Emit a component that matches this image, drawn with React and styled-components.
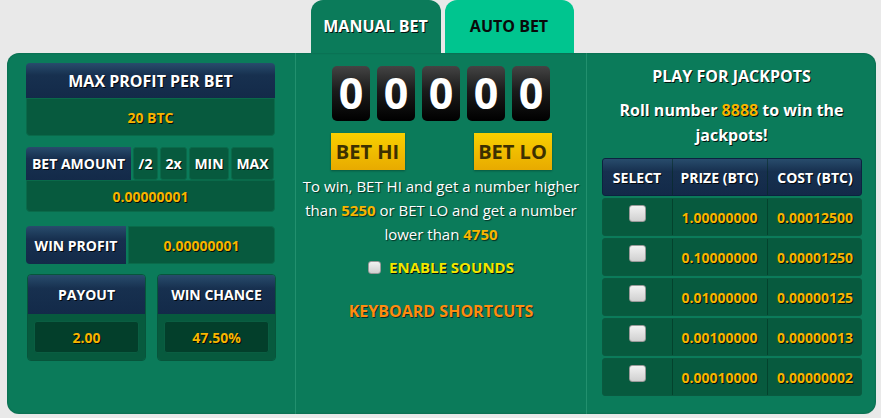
import React from 'react';
import styled, { createGlobalStyle } from 'styled-components';

const GlobalStyle = createGlobalStyle`
  body {
    margin: 0;
    background: #e9e9e9;
    font-family: 'Open Sans', 'Liberation Sans', sans-serif;
  }
`;

const shadow = '1px 1px 0 rgba(0, 0, 0, 0.85)';
const gold = '#f7b500';
const navy = 'linear-gradient(to bottom, #284c6c 0%, #17304f 35%, #132a49 100%)';

const Page = styled.div`
  width: 870px;
  padding-left: 7px;
`;

const Tabs = styled.div`
  display: flex;
  justify-content: center;
  gap: 4px;
  height: 53px;
`;

const Tab = styled.div`
  width: ${(p) => (p.active ? '130px' : '129px')};
  border-radius: 12px 12px 0 0;
  background: ${(p) => (p.active ? '#0b7b5a' : '#00c58f')};
  color: ${(p) => (p.active ? '#fff' : '#0a0a0a')};
  text-shadow: ${(p) => (p.active ? shadow : 'none')};
  font-weight: 700;
  font-size: 16px;
  display: flex;
  align-items: center;
  justify-content: center;
  padding-bottom: 2px;
  box-sizing: border-box;
`;

const Panel = styled.div`
  width: 869px;
  height: 361px;
  background: #0b7b5a;
  border-radius: 12px;
  display: grid;
  grid-template-columns: 289px 291px 289px;
  box-shadow: inset 0 0 2px rgba(0, 0, 0, 0.25);
`;

const Column = styled.div`
  box-sizing: border-box;
  padding: ${(p) => p.pad};
  border-right: ${(p) => (p.last ? 'none' : '1px solid rgba(120, 220, 180, 0.22)')};
  display: flex;
  flex-direction: column;
  align-items: ${(p) => (p.center ? 'center' : 'stretch')};
`;

const Header = styled.div`
  background: ${navy};
  color: #fff;
  text-shadow: ${shadow};
  font-weight: 700;
  font-size: ${(p) => p.size || '14px'};
  height: ${(p) => p.h};
  display: flex;
  align-items: center;
  justify-content: center;
  border-radius: ${(p) => p.radius || '4px 4px 0 0'};
  box-sizing: border-box;
  white-space: nowrap;
`;

const ValueBox = styled.div`
  background: #075a3e;
  color: ${gold};
  text-shadow: ${shadow};
  font-weight: 700;
  font-size: ${(p) => p.size || '14px'};
  height: ${(p) => p.h};
  display: flex;
  align-items: center;
  justify-content: center;
  border: 1px solid #0a6a4a;
  border-radius: ${(p) => p.radius || '0 0 4px 4px'};
  box-sizing: border-box;
`;

const Block = styled.div`
  display: flex;
  flex-direction: column;
  margin-top: ${(p) => p.mt || '0'};
`;

const BetRow = styled.div`
  display: grid;
  grid-template-columns: 105px 25px 27px 40px 43px;
  gap: 2px;
  height: 33px;
`;

const SmallBtn = styled.div`
  background: #075a3e;
  border: 1px solid #0a6a4a;
  border-radius: 3px;
  color: #fff;
  text-shadow: ${shadow};
  font-weight: 700;
  font-size: 14px;
  display: flex;
  align-items: center;
  justify-content: center;
`;

const SplitRow = styled.div`
  display: grid;
  grid-template-columns: 100px 1fr;
  gap: 2px;
  height: 38px;
  margin-top: 14px;
`;

const Cards = styled.div`
  display: grid;
  grid-template-columns: 119px 119px;
  gap: 11px;
  margin-top: 10px;
  padding-left: 1px;
`;

const Card = styled.div`
  display: flex;
  flex-direction: column;
  border-radius: 4px;
  overflow: hidden;
  border: 1px solid #07553b;
`;

const CardBody = styled.div`
  background: #075a3e;
  padding: 7px 6px;
  height: 46px;
  box-sizing: border-box;
`;

const InnerValue = styled.div`
  background: #033f2b;
  border: 1px solid #0a5e42;
  border-radius: 3px;
  height: 32px;
  display: flex;
  align-items: center;
  justify-content: center;
  color: ${gold};
  text-shadow: ${shadow};
  font-weight: 700;
  font-size: 14px;
  box-sizing: border-box;
`;

const Digits = styled.div`
  display: flex;
  gap: 7px;
`;

const Digit = styled.div`
  width: 38px;
  height: 55px;
  border-radius: 5px;
  background: linear-gradient(to bottom, #444 0%, #1b1b1b 45%, #000 100%);
  color: #fff;
  font-size: 43px;
  font-weight: 700;
  display: flex;
  align-items: center;
  justify-content: center;
  line-height: 1;
  padding-bottom: 2px;
  box-sizing: border-box;
`;

const Buttons = styled.div`
  display: flex;
  justify-content: space-between;
  width: 221px;
  margin-top: 12px;
`;

const BetButton = styled.div`
  width: ${(p) => p.w};
  height: 37px;
  background: linear-gradient(to bottom, #f8d000 0%, #e8aa00 100%);
  color: #3d3000;
  font-weight: 700;
  font-size: 20px;
  display: flex;
  align-items: center;
  justify-content: center;
  box-shadow: 0 1px 2px rgba(0, 0, 0, 0.3);
`;

const Info = styled.p`
  margin: 4px 0 0;
  color: #fff;
  text-shadow: 1px 1px 1px rgba(0, 0, 0, 0.6);
  font-size: 15px;
  line-height: 24px;
  text-align: center;
`;

const Gold = styled.span`
  color: ${gold};
  font-weight: 700;
`;

const SoundRow = styled.label`
  display: flex;
  align-items: center;
  gap: 8px;
  margin-top: 11px;
  color: #f2e600;
  font-weight: 700;
  font-size: 15px;
  text-shadow: ${shadow};
`;

const Check = styled.span`
  display: inline-block;
  width: ${(p) => p.size || '13px'};
  height: ${(p) => p.size || '13px'};
  border-radius: 3px;
  border: 1px solid #9a9a9a;
  background: linear-gradient(to bottom, #f2f2f2, #d0d0d0);
  box-sizing: border-box;
`;

const Shortcuts = styled.div`
  margin-top: 23px;
  color: #ff8c10;
  font-weight: 700;
  font-size: 16px;
  text-shadow: 1px 1px 0 rgba(0, 0, 0, 0.6);
`;

const Title = styled.div`
  color: #fff;
  text-shadow: ${shadow};
  font-weight: 700;
  font-size: 16px;
  text-align: center;
`;

const Roll = styled.div`
  margin-top: 11px;
  color: #fff;
  text-shadow: ${shadow};
  font-weight: 700;
  font-size: 16px;
  line-height: 25px;
  text-align: center;
`;

const Table = styled.div`
  margin-top: 10px;
  display: flex;
  flex-direction: column;
  gap: 2px;
  width: 260px;
  align-self: center;
`;

const TRow = styled.div`
  display: grid;
  grid-template-columns: 70px 95px 95px;
  height: 38px;
  background: ${(p) => (p.head ? navy : '#075a3e')};
  border: 1px solid ${(p) => (p.head ? '#0c2240' : '#0a5a40')};
  border-radius: 3px;
  box-sizing: border-box;
`;

const TCell = styled.div`
  display: flex;
  align-items: ${(p) => (p.top ? 'flex-start' : 'center')};
  justify-content: center;
  padding-top: ${(p) => (p.top ? '6px' : '0')};
  border-right: ${(p) => (p.last ? 'none' : '1px solid rgba(0, 40, 25, 0.45)')};
  color: ${(p) => (p.head ? '#fff' : gold)};
  text-shadow: ${shadow};
  font-weight: 700;
  font-size: 14px;
  white-space: nowrap;
`;

const jackpots = [
  ['1.00000000', '0.00012500'],
  ['0.10000000', '0.00001250'],
  ['0.01000000', '0.00000125'],
  ['0.00100000', '0.00000013'],
  ['0.00010000', '0.00000002'],
];

export default function App() {
  return (
    <Page>
      <GlobalStyle />
      <Tabs>
        <Tab active>MANUAL BET</Tab>
        <Tab>AUTO BET</Tab>
      </Tabs>
      <Panel>
        <Column pad="10px 20px 0 19px">
          <Block>
            <Header h="35px" size="16px">MAX PROFIT PER BET</Header>
            <ValueBox h="38px">20 BTC</ValueBox>
          </Block>
          <Block mt="11px">
            <BetRow>
              <Header h="33px" radius="4px 0 0 0">BET AMOUNT</Header>
              <SmallBtn>/2</SmallBtn>
              <SmallBtn>2x</SmallBtn>
              <SmallBtn>MIN</SmallBtn>
              <SmallBtn>MAX</SmallBtn>
            </BetRow>
            <ValueBox h="32px">0.00000001</ValueBox>
          </Block>
          <SplitRow>
            <Header h="38px" radius="4px 0 0 4px">WIN PROFIT</Header>
            <ValueBox h="38px" radius="0 4px 4px 0">0.00000001</ValueBox>
          </SplitRow>
          <Cards>
            <Card>
              <Header h="39px" radius="0">PAYOUT</Header>
              <CardBody>
                <InnerValue>2.00</InnerValue>
              </CardBody>
            </Card>
            <Card>
              <Header h="39px" radius="0">WIN CHANCE</Header>
              <CardBody>
                <InnerValue>47.50%</InnerValue>
              </CardBody>
            </Card>
          </Cards>
        </Column>
        <Column pad="13px 6px 0" center>
          <Digits>
            {[0, 0, 0, 0, 0].map((d, i) => (
              <Digit key={i}>{d}</Digit>
            ))}
          </Digits>
          <Buttons>
            <BetButton w="74px">BET HI</BetButton>
            <BetButton w="78px">BET LO</BetButton>
          </Buttons>
          <Info>
            To win, BET HI and get a number higher than <Gold>5250</Gold> or BET LO and get a
            number lower than <Gold>4750</Gold>
          </Info>
          <SoundRow>
            <Check />
            ENABLE SOUNDS
          </SoundRow>
          <Shortcuts>KEYBOARD SHORTCUTS</Shortcuts>
        </Column>
        <Column pad="12px 14px 0" last>
          <Title>PLAY FOR JACKPOTS</Title>
          <Roll>
            Roll number <Gold>8888</Gold> to win the
            <br />
            jackpots!
          </Roll>
          <Table>
            <TRow head>
              <TCell head>SELECT</TCell>
              <TCell head>PRIZE (BTC)</TCell>
              <TCell head last>COST (BTC)</TCell>
            </TRow>
            {jackpots.map(([prize, cost]) => (
              <TRow key={prize}>
                <TCell top>
                  <Check size="17px" />
                </TCell>
                <TCell>{prize}</TCell>
                <TCell last>{cost}</TCell>
              </TRow>
            ))}
          </Table>
        </Column>
      </Panel>
    </Page>
  );
}
